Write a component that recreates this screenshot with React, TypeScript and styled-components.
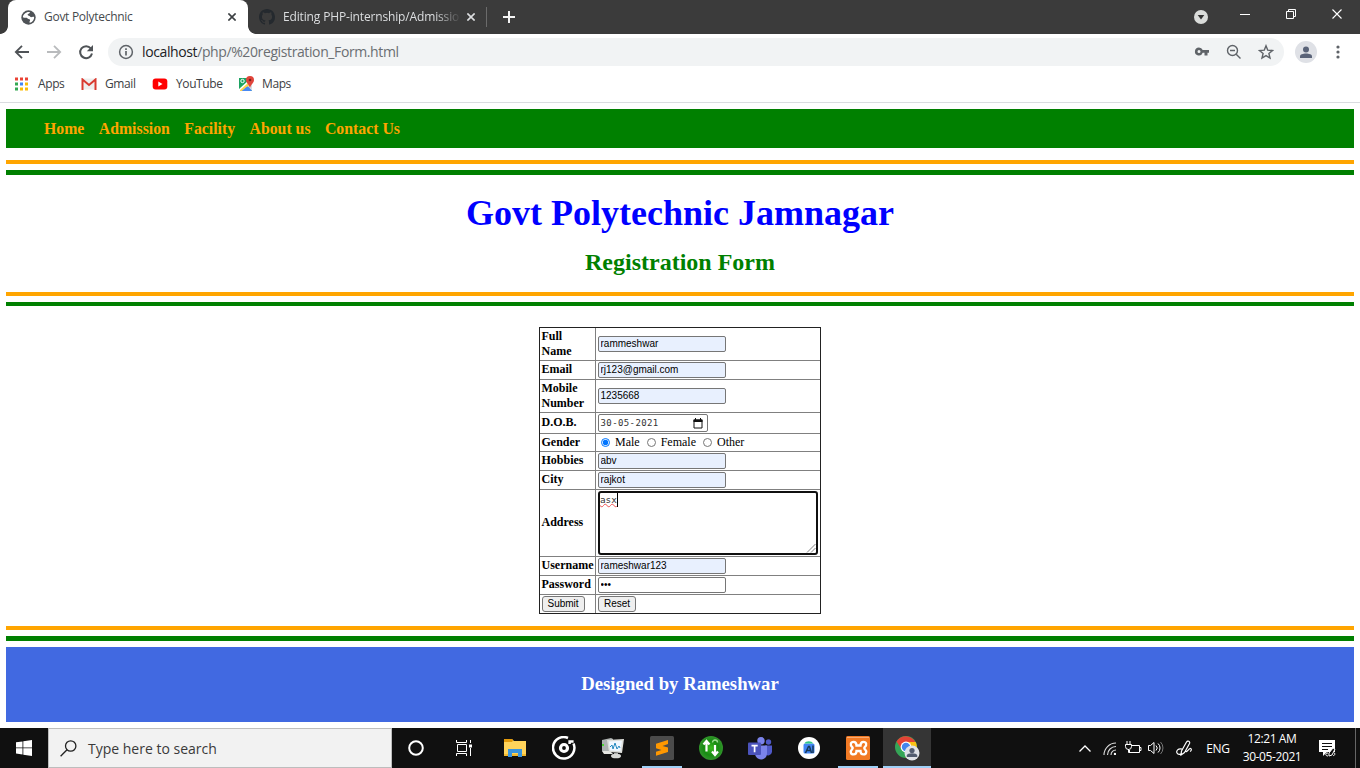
import React from "react";
import styled, { createGlobalStyle, css } from "styled-components";

const GlobalStyle = createGlobalStyle`
  html, body { margin: 0; padding: 0; background: #fff; overflow: hidden; }
  * { box-sizing: border-box; }
  svg { display: block; flex: none; }
`;

const ui = `"Open Sans", "Noto Sans", sans-serif`;
const serif = `"Liberation Serif", "Times New Roman", serif`;
const sans = `"Liberation Sans", Arial, sans-serif`;
const mono = `"DejaVu Sans Mono", monospace`;

const Screen = styled.div`
  width: 1360px;
  height: 768px;
  display: flex;
  flex-direction: column;
  background: #fff;
  overflow: hidden;
`;

/* ---------- browser chrome ---------- */

const TabStrip = styled.div`
  height: 34px;
  background: #3b3b3b;
  display: flex;
  align-items: stretch;
  font-family: ${ui};
  font-size: 12px;
`;

const Corner = styled.div<{ $side: "left" | "right" }>`
  width: 8px;
  background: radial-gradient(circle at ${(p) => (p.$side === "left" ? "0 0" : "100% 0")}, #3b3b3b 7.5px, #fff 8.2px) no-repeat 0 100% / 8px 8px;
`;

const ActiveTab = styled.div`
  width: 240px;
  flex: none;
  background: #fff;
  border-radius: 8px 8px 0 0;
  display: flex;
  align-items: center;
  padding-left: 13px;
  color: #45494d;
`;

const ActiveShell = styled.div`
  display: flex;
  width: 248px;
`;

const TabTitle = styled.span<{ $fade?: boolean; $spacing: number }>`
  width: 184px;
  margin-left: 8px;
  white-space: nowrap;
  overflow: hidden;
  line-height: 20px;
  letter-spacing: ${(p) => p.$spacing}px;
  ${(p) =>
    p.$fade &&
    css`
      width: 180px;
      margin-right: 4px;
      mask-image: linear-gradient(90deg, #000 152px, transparent 178px);
    `}
`;

const IdleTab = styled.div`
  width: 231px;
  height: 34px;
  display: flex;
  align-items: center;
  padding-left: 3px;
  color: #dcdee0;
`;

const TabDivider = styled.div`
  width: 1px;
  height: 20px;
  margin: 7px 16px 0 -1px;
  background: #6b6b6b;
`;

const TabActions = styled.div`
  display: flex;
  align-items: center;
`;

const WindowButtons = styled.div`
  display: flex;
  align-items: flex-start;
  margin-left: auto;
`;

const WindowButton = styled.div<{ $w: number; $top: number }>`
  width: ${(p) => p.$w}px;
  padding-top: ${(p) => p.$top}px;
  display: flex;
  justify-content: center;
`;

const Toolbar = styled.div`
  height: 36px;
  display: flex;
  align-items: center;
  padding-left: 14px;
  font-family: ${ui};
`;

const NavButton = styled.div`
  width: 32px;
`;

const AddressBar = styled.div`
  width: 1176px;
  height: 28px;
  margin-left: -2px;
  border-radius: 14px;
  background: #f1f3f4;
  display: flex;
  align-items: center;
  padding: 0 10px;
`;

const Url = styled.span`
  margin-left: 8px;
  font-size: 14px;
  line-height: 20px;
  letter-spacing: -0.39px;
  color: #6a6e72;
  b { font-weight: 400; color: #202124; }
`;

const AddressIcons = styled.div`
  margin-left: auto;
  display: flex;
  gap: 16px;
`;

const Avatar = styled.div`
  width: 22px;
  height: 22px;
  margin: 0 19px 0 11px;
  border-radius: 50%;
  background: #dfe1e6;
  display: flex;
  align-items: center;
  justify-content: center;
`;

const Bookmarks = styled.div`
  height: 33px;
  padding: 0 0 5px 14px;
  border-bottom: 1px solid #dadce0;
  display: flex;
  align-items: center;
  font-family: ${ui};
  font-size: 12px;
  letter-spacing: -0.4px;
  color: #3c4043;
`;

const Bookmark = styled.div<{ $w: number; $gap: number }>`
  width: ${(p) => p.$w}px;
  display: flex;
  align-items: center;
  gap: ${(p) => p.$gap}px;
  line-height: 18px;
`;

/* ---------- web page ---------- */

const Page = styled.main`
  height: 625px;
  padding: 6px;
  font-family: ${serif};
  color: #000;
`;

const SiteNav = styled.nav`
  height: 39px;
  padding: 1px 0 0 38px;
  background: green;
  display: flex;
  align-items: center;
  gap: 14.4px;
  font-size: 15.8px;
  font-weight: 700;
  color: orange;
  span { white-space: nowrap; }
`;

const Rule = styled.div<{ $color: string; $h: number; $top: number }>`
  height: ${(p) => p.$h}px;
  margin-top: ${(p) => p.$top}px;
  background: ${(p) => p.$color};
`;

const Title = styled.h1`
  margin: 18px 0 0;
  font-size: 36px;
  line-height: 41px;
  text-align: center;
  color: blue;
`;

const Subtitle = styled.h2`
  margin: 14px 0 0;
  font-size: 24px;
  line-height: 28px;
  height: 29px;
  text-align: center;
  color: green;
`;

const FormGrid = styled.form`
  width: 282px;
  margin: 21px auto 0;
  border: 1px solid #222;
  font-size: 12px;
`;

const Row = styled.div<{ $h: number }>`
  height: ${(p) => p.$h}px;
  display: flex;
  border-bottom: 1px solid #808080;
  &:last-child { border-bottom: 0; }
`;

const Label = styled.div<{ $lift?: boolean }>`
  width: 56px;
  padding: 0 0 ${(p) => (p.$lift ? 2 : 0)}px 1.5px;
  border-right: 1px solid #808080;
  display: flex;
  align-items: center;
  font-weight: 700;
  line-height: 15px;
`;

const Field = styled.div`
  flex: 1;
  padding-left: 2px;
  display: flex;
  align-items: center;
`;

const TextInput = styled.input<{ $filled?: boolean }>`
  width: 128px;
  height: 16px;
  margin: 0;
  padding: 0 2px 1px 1.5px;
  border: 1px solid #767676;
  border-radius: 2px;
  outline: 0;
  background: ${(p) => (p.$filled ? "#e8f0fe" : "#fff")};
  font: 10px ${sans};
  letter-spacing: 0;
  color: #000;
`;

const DateInput = styled.div`
  width: 110px;
  height: 18px;
  padding: 0 4px 0 1.5px;
  border: 1px solid #767676;
  border-radius: 2px;
  display: flex;
  align-items: center;
  justify-content: space-between;
  font: 9px ${mono};
  letter-spacing: 0.4px;
  color: #333;
`;

const Radio = styled.input`
  width: 9px;
  height: 9px;
  margin: 0 5px 1px 3px;
  accent-color: #0075ff;
`;

const RadioLabel = styled.label`
  display: flex;
  align-items: center;
  margin-right: 4px;
  line-height: 15px;
`;

const AddressArea = styled.div`
  width: 220px;
  height: 64px;
  border: 2px solid #101010;
  border-radius: 3px;
  display: flex;
  justify-content: space-between;
  font: 9.3px/14px ${mono};
  color: #333;
`;

const Misspelt = styled.span`
  height: 14px;
  border-right: 1px solid #000;
  text-decoration: underline wavy #e55 0.8px;
  text-underline-offset: 0;
`;

const Grip = styled.svg`
  align-self: flex-end;
`;

const PushButton = styled.button`
  height: 16px;
  margin: 0;
  padding: 0 5px;
  border: 1px solid #767676;
  border-radius: 3px;
  background: #efefef;
  font: 10px/14px ${sans};
  color: #000;
`;

const Footer = styled.footer`
  height: 75px;
  margin-top: 6px;
  padding-bottom: 2px;
  background: royalblue;
  color: #fff;
  display: flex;
  align-items: center;
  justify-content: center;
  font-size: 18.72px;
  font-weight: 700;
`;

/* ---------- taskbar ---------- */

const Taskbar = styled.div`
  height: 40px;
  background: #101010;
  display: flex;
  font-family: ${ui};
`;

const StartButton = styled.div`
  width: 48px;
  display: flex;
  align-items: center;
  justify-content: center;
`;

const SearchBox = styled.div`
  width: 344px;
  border: 1px solid #bdbdbd;
  background: #f2f2f2;
  display: flex;
  align-items: center;
  gap: 11px;
  padding-left: 11px;
  font-size: 14px;
  color: #3a3a3a;
`;

const TaskItem = styled.div<{ $state?: "open" | "active" }>`
  width: ${(p) => (p.$state === "active" ? 48 : 49)}px;
  margin-left: ${(p) => (p.$state === "active" ? 1 : 0)}px;
  height: 40px;
  display: flex;
  align-items: center;
  justify-content: center;
  background:
    linear-gradient(#9fd0f7, #9fd0f7) no-repeat 50% 100% / ${(p) => (p.$state === "active" ? "48px 2px" : p.$state ? "40px 2px" : "0 0")},
    ${(p) => (p.$state === "active" ? "#353535" : "transparent")};
`;

const Tray = styled.div`
  margin-left: auto;
  display: flex;
  align-items: center;
  color: #fff;
  font-size: 12px;
`;

const TrayCell = styled.div<{ $w: number }>`
  width: ${(p) => p.$w}px;
  display: flex;
  justify-content: center;
  letter-spacing: -0.35px;
`;

const Clock = styled.div`
  width: 66px;
  margin-left: 4px;
  text-align: center;
  line-height: 18px;
  font-size: 12px;
  letter-spacing: -0.4px;
`;

const ShowDesktop = styled.div`
  width: 5px;
  height: 40px;
  border-left: 1px solid #666;
`;

const Cross = ({ color, size = 8, w = 1.6 }: { color: string; size?: number; w?: number }) => (
  <svg width={size} height={size} viewBox="0 0 8 8" stroke={color} strokeWidth={w}>
    <path d="M.4.4 7.6 7.6M7.6.4.4 7.6" />
  </svg>
);

const textRow = (name: string, value: string, h: number) => (
  <Row $h={h}>
    <Label $lift={h < 20}>{name}</Label>
    <Field>
      <TextInput $filled defaultValue={value} spellCheck={false} />
    </Field>
  </Row>
);

const appColors = ["#ea4335", "#ea4335", "#ea4335", "#34a853", "#4285f4", "#fbbc05", "#34a853", "#fbbc05", "#fbbc05"];

function BrowserTabs() {
  return (
    <TabStrip>
      <Corner $side="left" />
      <ActiveShell>
        <ActiveTab>
          <svg width="15" height="15" viewBox="0 0 24 24">
            <circle cx="12" cy="12" r="11.5" fill="#4f5357" />
            <path fill="#fff" d="M14 3.200c1 2-1.500 2.300-3 3.300-1 .8 0 2.500 1.500 2.500 2 0 2 2.500 4 2.500 1.500 0 2-1 4.500-.5.5 4-2.500 8-6.500 9.500-1.500-.5-1-2-.3-3 1-1.500-.2-3-2.200-3-1.500 0-1.500-2-3-2-2 0-3.500.5-6-1C3.200 7 8 2.500 14 3.200z" />
          </svg>
          <TabTitle $spacing={-0.28}>Govt Polytechnic</TabTitle>
          <Cross color="#3c4043" />
        </ActiveTab>
        <Corner $side="right" />
      </ActiveShell>
      <IdleTab>
        <GithubMark />
        <TabTitle $fade $spacing={-0.15}>Editing PHP-internship/Admissio</TabTitle>
        <Cross color="#dcdee0" />
      </IdleTab>
      <TabDivider />
      <TabActions>
        <svg width="12" height="12" viewBox="0 0 12 12" stroke="#f4f4f4" strokeWidth="2">
          <path d="M6 0v12M0 6h12" />
        </svg>
      </TabActions>
      <WindowButtons>
        <WindowButton $w={42} $top={10}>
          <svg width="14" height="14" viewBox="0 0 14 14">
            <circle cx="7" cy="7" r="7" fill="#dadcda" />
            <path d="M3.700 5h6.600L7 9.500z" fill="#333" />
          </svg>
        </WindowButton>
        <WindowButton $w={46} $top={14}>
          <svg width="10" height="1"><path d="M0 .5h10" stroke="#fff" /></svg>
        </WindowButton>
        <WindowButton $w={46} $top={9}>
          <svg width="10" height="10" viewBox="0 0 10 10" fill="none" stroke="#fff">
            <path d="M.5 2.500h7v7h-7zM2.500 2.500v-2h7v7h-2" />
          </svg>
        </WindowButton>
        <WindowButton $w={46} $top={9}>
          <Cross color="#fff" size={10} w={0.9} />
        </WindowButton>
      </WindowButtons>
    </TabStrip>
  );
}

function GithubMark() {
  return (
    <svg width="16" height="16" viewBox="0 0 16 16" fill="#24292e">
      <path d="M8 0C3.580 0 0 3.580 0 8c0 3.540 2.290 6.530 5.470 7.590.4.070.55-.17.55-.38 0-.19-.01-.82-.01-1.490-2.010.37-2.530-.49-2.690-.94-.09-.23-.48-.94-.82-1.130-.28-.15-.68-.52-.01-.53.63-.01 1.080.58 1.230.82.72 1.210 1.870.87 2.330.66.07-.52.28-.87.51-1.070-1.780-.2-3.640-.89-3.640-3.950 0-.87.31-1.590.82-2.150-.08-.2-.36-1.020.08-2.120 0 0 .67-.21 2.200.82a7.600 7.600 0 0 1 4 0c1.530-1.040 2.200-.82 2.200-.82.44 1.100.16 1.920.08 2.120.51.56.82 1.270.82 2.150 0 3.070-1.870 3.750-3.650 3.950.29.25.54.73.54 1.480 0 1.070-.01 1.930-.01 2.200 0 .21.15.46.55.38A8 8 0 0 0 16 8c0-4.420-3.580-8-8-8z" />
    </svg>
  );
}

function BrowserToolbar() {
  return (
    <Toolbar>
      <NavButton>
        <svg width="16" height="16" viewBox="0 0 16 16" fill="none" stroke="#4f5357" strokeWidth="1.800">
          <path d="M15 8H2.500M8 1.800 1.800 8 8 14.200" />
        </svg>
      </NavButton>
      <NavButton>
        <svg width="16" height="16" viewBox="0 0 16 16" fill="none" stroke="#b9bbbd" strokeWidth="1.800">
          <path d="M1 8h12.500M8 1.800 14.200 8 8 14.200" />
        </svg>
      </NavButton>
      <NavButton>
        <svg width="16" height="16" viewBox="0 0 16 16">
          <path d="M12.800 4.300A6 6 0 1 0 14 9.600" fill="none" stroke="#4f5357" strokeWidth="2" />
          <path d="M15 1v6.200H8.800z" fill="#4f5357" />
        </svg>
      </NavButton>
      <AddressBar>
        <svg width="16" height="16" viewBox="0 0 16 16" fill="none" stroke="#5f6368" strokeWidth="1.500">
          <circle cx="8" cy="8" r="6.400" />
          <path d="M8 7v4.500M8 4.300v1.600" strokeWidth="1.700" />
        </svg>
        <Url><b>localhost</b>/php/%20registration_Form.html</Url>
        <AddressIcons>
          <svg width="16" height="16" viewBox="0 0 16 16">
            <path fill="#5f6368" fillRule="evenodd" d="M5 3.500a4 4 0 1 0 3.700 5.300H10.500V11.500h3V8.800H15V6H8.700A4 4 0 0 0 5 3.500zm0 2.400a1.500 1.500 0 1 1 0 3 1.500 1.500 0 0 1 0-3z" />
          </svg>
          <svg width="16" height="16" viewBox="0 0 16 16" fill="none" stroke="#5f6368" strokeWidth="1.400">
            <circle cx="6.500" cy="6.500" r="5" />
            <path d="M4 6.500h5M10.200 10.200l4.300 4.300" />
          </svg>
          <svg width="16" height="16" viewBox="0 0 16 16" fill="none" stroke="#5f6368" strokeWidth="1.400">
            <path d="m8 1.800 1.700 4.300 4.800.4-3.600 3 1.100 4.600L8 11.600l-4 2.500 1.100-4.600-3.600-3 4.800-.4z" />
          </svg>
        </AddressIcons>
      </AddressBar>
      <Avatar>
        <svg width="12" height="13" viewBox="0 0 12 13" fill="#5a6378">
          <circle cx="6" cy="3.500" r="3" />
          <path d="M0 12V10.500C0 8.500 3 7.600 6 7.600s6 .9 6 2.900V12z" />
        </svg>
      </Avatar>
      <svg width="4" height="14" viewBox="0 0 4 14" fill="#5f6368">
        <circle cx="2" cy="2" r="1.600" />
        <circle cx="2" cy="7" r="1.600" />
        <circle cx="2" cy="12" r="1.600" />
      </svg>
    </Toolbar>
  );
}

function BookmarkBar() {
  return (
    <Bookmarks>
      <Bookmark $w={67} $gap={9}>
        <svg width="15" height="14" viewBox="0 0 15 14">
          {appColors.map((c, i) => (
            <rect key={i} x={1 + (i % 3) * 5} y={Math.floor(i / 3) * 5 + 0.5} width="3" height="3" fill={c} />
          ))}
        </svg>
        Apps
      </Bookmark>
      <Bookmark $w={71} $gap={8}>
        <svg width="16" height="12" viewBox="0 0 16 12">
          <path d="M1 .5h14v11H1z" fill="#eee" />
          <path d="M1.500 12V1.500L8 7l6.500-5.500V12" fill="none" stroke="#d93a30" strokeWidth="2" />
        </svg>
        Gmail
      </Bookmark>
      <Bookmark $w={87} $gap={8}>
        <svg width="16" height="12" viewBox="0 0 16 12">
          <rect x=".7" y=".5" width="14.600" height="11" rx="3" fill="#f00" />
          <path d="M6.300 3.500v5L10.500 6z" fill="#fff" />
        </svg>
        YouTube
      </Bookmark>
      <Bookmark $w={60} $gap={8}>
        <svg width="15" height="16" viewBox="0 0 15 16">
          <path d="M0 2h13v13H0z" fill="#1da362" />
          <path d="M6 9 13 3v12z" fill="#d8dde3" />
          <path d="m0 15 7-7 6 7z" fill="#4889f4" />
          <path d="M0 13 11 3l2 3-5 4-6 5H0z" fill="#fff" />
          <path d="m1 14 8-7 1.500 2L3 15H1z" fill="#ffd04b" />
          <path d="m3 15 4.500-4L11 15z" fill="#4889f4" />
          <circle cx="3.500" cy="5" r="1.700" fill="none" stroke="#fff" />
          <path d="M11 0a4 4 0 0 1 4 4c0 3-3 4-4 8-1-4-4-5-4-8a4 4 0 0 1 4-4z" fill="#e1443a" />
          <circle cx="11" cy="4" r="1.300" fill="#7b231e" />
        </svg>
        Maps
      </Bookmark>
    </Bookmarks>
  );
}

function RegistrationPage() {
  return (
    <Page>
      <SiteNav>
        {["Home", "Admission", "Facility", "About us", "Contact Us"].map((t) => <span key={t}>{t}</span>)}
      </SiteNav>
      <Rule $color="orange" $h={4} $top={12} />
      <Rule $color="green" $h={5} $top={6} />
      <Title>Govt Polytechnic Jamnagar</Title>
      <Subtitle>Registration Form</Subtitle>
      <Rule $color="orange" $h={4} $top={15} />
      <Rule $color="green" $h={4} $top={6} />
      <FormGrid onSubmit={(e) => e.preventDefault()}>
        {textRow("Full Name", "rammeshwar", 33)}
        {textRow("Email", "rj123@gmail.com", 19)}
        {textRow("Mobile Number", "1235668", 33)}
        <Row $h={21}>
          <Label $lift>D.O.B.</Label>
          <Field>
            <DateInput>
              30-05-2021
              <svg width="10" height="11" viewBox="0 0 10 11">
                <path d="M1 2h8v8H1z" fill="none" stroke="#111" />
                <path d="M.5 1.500h9V4h-9zM2 0h1v2H2zM7 0h1v2H7z" fill="#111" />
              </svg>
            </DateInput>
          </Field>
        </Row>
        <Row $h={18}>
          <Label>Gender</Label>
          <Field>
            <RadioLabel><Radio type="radio" name="gender" defaultChecked />Male</RadioLabel>
            <RadioLabel><Radio type="radio" name="gender" />Female</RadioLabel>
            <RadioLabel><Radio type="radio" name="gender" />Other</RadioLabel>
          </Field>
        </Row>
        {textRow("Hobbies", "abv", 19)}
        {textRow("City", "rajkot", 19)}
        <Row $h={67}>
          <Label $lift>Address</Label>
          <Field>
            <AddressArea>
              <Misspelt>asx</Misspelt>
              <Grip width="10" height="10" viewBox="0 0 10 10" stroke="#777" strokeWidth=".9">
                <path d="M1 9.500 9.500 1M5 9.500 9.500 5" />
              </Grip>
            </AddressArea>
          </Field>
        </Row>
        {textRow("Username", "rameshwar123", 19)}
        <Row $h={19}>
          <Label $lift>Password</Label>
          <Field><TextInput type="password" defaultValue="asx" /></Field>
        </Row>
        <Row $h={18}>
          <Label><PushButton type="submit">Submit</PushButton></Label>
          <Field><PushButton type="reset">Reset</PushButton></Field>
        </Row>
      </FormGrid>
      <Rule $color="orange" $h={4} $top={12} />
      <Rule $color="green" $h={5} $top={6} />
      <Footer>Designed by Rameshwar</Footer>
    </Page>
  );
}

function WindowsTaskbar() {
  return (
    <Taskbar>
      <StartButton>
        <svg width="16" height="16" viewBox="0 0 16 16" fill="#fff">
          <path d="M0 2.300 6.500 1.400v6.100H0zM7.300 1.300 16 0v7.500H7.300zM0 8.300h6.500v6.200L0 13.600zM7.300 8.300H16V16l-8.700-1.300z" />
        </svg>
      </StartButton>
      <SearchBox>
        <svg width="17" height="17" viewBox="0 0 17 17" fill="none" stroke="#222" strokeWidth="1.300">
          <circle cx="10.700" cy="6" r="5.200" />
          <path d="M7 9.800.6 16.300" />
        </svg>
        Type here to search
      </SearchBox>
      <TaskItem>
        <svg width="17" height="16" viewBox="0 0 17 16"><circle cx="8" cy="8" r="6.800" fill="none" stroke="#fff" strokeWidth="2" /></svg>
      </TaskItem>
      <TaskItem>
        <svg width="19" height="16" viewBox="0 0 19 16" fill="none" stroke="#fff">
          <path d="M.5 0v2.500h10V0M.5 16v-2.500h10V16M1.500 4.500h9v7h-9zM14.500 0v3M14.500 8v8" />
          <path d="M13 4.500h3v3h-3z" fill="#fff" stroke="none" />
        </svg>
      </TaskItem>
      <TaskItem>
        <svg width="22" height="18" viewBox="0 0 22 18">
          <path d="M0 0h8l2 2h12v15H0z" fill="#ffd35b" />
          <path d="M0 0h8l1 1.500L8 3H0z" fill="#e39a0c" />
          <path d="M0 15h22v2H0z" fill="#f2b92d" />
          <path d="M4 18v-8h14v8h-4v-4H8v4z" fill="#3a94dc" />
        </svg>
      </TaskItem>
      <TaskItem>
        <svg width="24" height="24" viewBox="0 0 24 24" fill="none" stroke="#fff">
          <path d="M16 2A10.700 10.700 0 1 0 21.500 7.500" strokeWidth="2.500" />
          <circle cx="12" cy="12" r="3.500" strokeWidth="3.200" />
          <path d="M17.600 8V5.500h4" strokeWidth="2.500" />
        </svg>
      </TaskItem>
      <TaskItem>
        <svg width="24" height="22" viewBox="0 0 24 22">
          <path d="m1 3 9-2 2 1v11l-9 2-2-1z" fill="#aeb2b1" />
          <path d="M1 14h8l3 3H3z" fill="#e7e7e3" />
          <path d="m6 3 17-1-2 14-13-1z" fill="#dedfdb" />
          <path d="m8 4.500 13-.8-1.500 10.500-10.500-.7z" fill="#f0f8ff" />
          <path d="m9 10 2-2 1 4 2-6 2 6 2-3 1 2" fill="none" stroke="#268ac0" />
          <path d="M13 16h4v2h-4z" fill="#a9aaa8" />
          <ellipse cx="15" cy="19" rx="5" ry="2.300" fill="#d9dad7" />
          <path d="M1 7h2v2H1z" fill="#4bd532" />
        </svg>
      </TaskItem>
      <TaskItem $state="open">
        <svg width="24" height="24" viewBox="0 0 24 24">
          <rect width="24" height="24" rx="1.500" fill="#4b4b4b" />
          <path d="M18 4 6 7.800v4.400l5.500 1.700-5.500 1.800v4.100l12-3.800v-4.400l-5.500-1.700L18 8.100z" fill="#ff9800" />
        </svg>
      </TaskItem>
      <TaskItem>
        <svg width="24" height="24" viewBox="0 0 24 24">
          <defs>
            <radialGradient id="leaf"><stop stopColor="#3bbb20" /><stop offset=".6" stopColor="#178b12" /><stop offset="1" stopColor="#31942b" /></radialGradient>
          </defs>
          <circle cx="12" cy="12" r="12" fill="url(#leaf)" />
          <path d="M7.500 15.500V6M4.500 8.500l3-3.500 3 3.500M16 9v9M13 15.500l3 3.500 3-3.500" fill="none" stroke="#fff" strokeWidth="2.200" />
          <path d="M13.500 6.500a2.500 2.500 0 0 1 5 0" fill="none" stroke="#9bdc8f" strokeWidth="1.400" />
        </svg>
      </TaskItem>
      <TaskItem>
        <svg width="24" height="23" viewBox="0 0 24 23">
          <circle cx="20.500" cy="5" r="2.700" fill="#5059c9" />
          <path d="M17 8.500h7V15a4 4 0 0 1-7 2z" fill="#5059c9" />
          <circle cx="13" cy="3.800" r="3.700" fill="#7b83eb" />
          <path d="M7 8.500h12v7.500a6 6 0 0 1-12 1z" fill="#7b83eb" />
          <rect y="5.500" width="13" height="12.500" rx="1" fill="#4b53bc" />
          <path d="M3.500 8.700h6.200M6.600 8.700v6.500" stroke="#fff" strokeWidth="1.700" />
        </svg>
      </TaskItem>
      <TaskItem>
        <svg width="22" height="22" viewBox="0 0 22 22">
          <circle cx="11" cy="11" r="11" fill="#fff" />
          <rect x="5.500" y="6.500" width="11" height="10" rx="1.500" fill="#4285f4" />
          <path d="M6.500 6.500c1-3 7.500-3 8.500 0z" fill="#32c786" />
          <path d="m7.500 16 3-6.500h1l2 6.500M9 13.500h4M15 8.500V16" fill="none" stroke="#173957" strokeWidth="1.500" />
        </svg>
      </TaskItem>
      <TaskItem $state="open">
        <svg width="24" height="24" viewBox="0 0 24 24">
          <rect width="24" height="24" rx="1.500" fill="#f27a24" />
          <path d="M1 1.500h22" stroke="#f8ab73" />
          <path d="M7.500 5.800C10 5.800 10.500 7.500 10.500 9.500h4C14.500 7.500 15 5.800 17.500 5.800c3 0 3.500 3.200 1.500 5-1 1-1 1.600 0 2.600 2 2 1.500 5-1.500 5C15 18.400 14.500 17 14.500 15h-4C10.500 17 10 18.400 7.500 18.400c-3 0-3.500-3-1.500-5 1-1 1-1.600 0-2.600-2-1.800-1.500-5 1.500-5z" fill="none" stroke="#fff" strokeWidth="2.300" />
        </svg>
      </TaskItem>
      <TaskItem $state="active">
        <svg width="26" height="26" viewBox="0 0 26 26">
          <circle cx="12" cy="12" r="11" fill="#35a557" />
          <path d="M2.500 6.500A11 11 0 0 1 21.500 7L12 7l-4.500 7z" fill="#e34335" />
          <path d="M12 7h9.700A11 11 0 0 1 11.500 23l5-8z" fill="#fbc116" />
          <circle cx="12" cy="12" r="5.400" fill="#fff" />
          <circle cx="12" cy="12" r="4.200" fill="#4486ed" />
          <circle cx="18" cy="18" r="7.500" fill="#dfe2e8" />
          <circle cx="18" cy="15.500" r="2.600" fill="#525c70" />
          <path d="M12.800 22v-1.500c0-3 10.400-3 10.400 0V22z" fill="#525c70" />
        </svg>
      </TaskItem>
      <Tray>
        <TrayCell $w={24}>
          <svg width="12" height="7" viewBox="0 0 12 7" fill="none" stroke="#fff" strokeWidth="1.300"><path d="m.5 6.500 5.500-5.500 5.500 5.500" /></svg>
        </TrayCell>
        <TrayCell $w={25}>
          <svg width="13" height="13" viewBox="0 0 13 13" fill="none" stroke="#ddd" strokeWidth="1.100">
            <path d="M1 13A12 12 0 0 1 13 1M4.500 13A8.500 8.500 0 0 1 13 4.500M8 13a5 5 0 0 1 5-5" />
            <circle cx="12" cy="12" r="1.200" fill="#fff" stroke="none" />
          </svg>
        </TrayCell>
        <TrayCell $w={22}>
          <svg width="17" height="14" viewBox="0 0 17 14" fill="none" stroke="#fff">
            <path d="M6.500 4.500h8v7h-10V9M14.500 6.500h1.500v3h-1.500M2 0v3M5 0v3M.5 3.500h6v2a3 3 0 0 1-6 0zM3.500 8v3.500H5" />
          </svg>
        </TrayCell>
        <TrayCell $w={24}>
          <svg width="16" height="14" viewBox="0 0 16 14" fill="none" stroke="#fff">
            <path d="M.5 4.500h2L6 1.500v11l-3.500-3h-2zM8 4.500a3.500 3.500 0 0 1 0 5M10 2.500a6 6 0 0 1 0 9" />
            <path d="M12.500 1a8.500 8.500 0 0 1 0 12" stroke="#777" />
          </svg>
        </TrayCell>
        <TrayCell $w={33}>
          <svg width="17" height="16" viewBox="0 0 17 16" fill="none" stroke="#fff" strokeWidth="1.200">
            <path d="m5.500 11 5-9c1-2 4-.5 3 1.500l-5 9L5 15zM6 9C2 8 0 11 1 13s3 1.500 5 .5M9.500 11c1 2 3-2 4.500-2.500s2 2 0 3" />
          </svg>
        </TrayCell>
        <TrayCell $w={34}>ENG</TrayCell>
        <Clock>
          12:21 AM
          <br />
          30-05-2021
        </Clock>
        <TrayCell $w={44}>
          <svg width="17" height="17" viewBox="0 0 17 17">
            <path d="M0 0h16v12H8l-4 4v-4H0z" fill="#fff" />
            <path d="M3 3.500h10M3 6.500h10M3 9.500h6" stroke="#101010" />
            <path d="m10 13 4-5 2 1-3 6-3 1zM9 13c-3 0-3 3 0 3M14 15c1 2 3-2 1-2" fill="#101010" stroke="#fff" />
          </svg>
        </TrayCell>
        <TrayCell $w={6} />
        <ShowDesktop />
      </Tray>
    </Taskbar>
  );
}

export default function App() {
  return (
    <Screen>
      <GlobalStyle />
      <BrowserTabs />
      <BrowserToolbar />
      <BookmarkBar />
      <RegistrationPage />
      <WindowsTaskbar />
    </Screen>
  );
}
